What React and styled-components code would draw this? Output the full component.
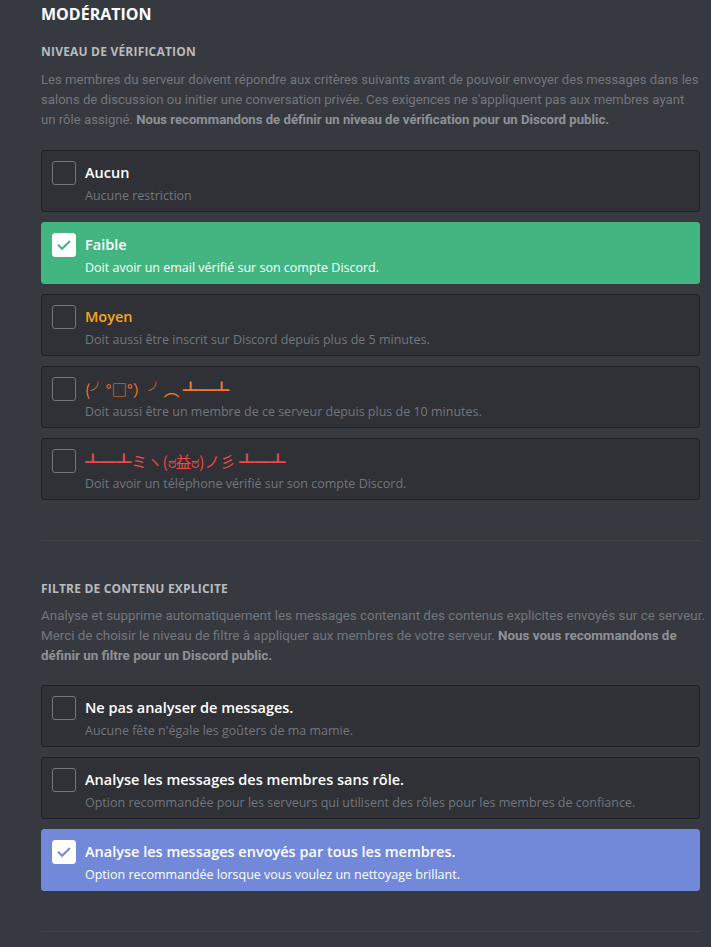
import React from "react";
import styled, { createGlobalStyle } from "styled-components";

const GlobalStyle = createGlobalStyle`
  html, body {
    margin: 0;
    padding: 0;
    background: #36393f;
  }
  body {
    font-family: "Open Sans", "Noto Sans", "DejaVu Sans", "Noto Sans CJK JP", sans-serif;
  }
`;

const verificationLevels = [
  { title: "Aucun", desc: "Aucune restriction" },
  { title: "Faible", desc: "Doit avoir un email vérifié sur son compte Discord.", checked: true, accent: "#43b581" },
  { title: "Moyen", desc: "Doit aussi être inscrit sur Discord depuis plus de 5 minutes.", color: "#faa61a" },
  { title: "(╯°□°）╯︵ ┻━┻", desc: "Doit aussi être un membre de ce serveur depuis plus de 10 minutes.", color: "#f57731", kaomoji: true },
  { title: "┻━┻ミヽ(ಠ益ಠ)ノ彡 ┻━┻", desc: "Doit avoir un téléphone vérifié sur son compte Discord.", color: "#f04747", kaomoji: true },
];

const filterLevels = [
  { title: "Ne pas analyser de messages.", desc: "Aucune fête n'égale les goûters de ma mamie." },
  { title: "Analyse les messages des membres sans rôle.", desc: "Option recommandée pour les serveurs qui utilisent des rôles pour les membres de confiance." },
  { title: "Analyse les messages envoyés par tous les membres.", desc: "Option recommandée lorsque vous voulez un nettoyage brillant.", checked: true, accent: "#7289da" },
];

const Check = ({ color }) => (
  <svg width="18" height="18" viewBox="0 0 24 24">
    <path d="M5 12.5l4.5 4.5L19 7.5" fill="none" stroke={color} strokeWidth="2.6" strokeLinecap="square" />
  </svg>
);

const RadioCard = ({ title, desc, checked, accent, color, kaomoji }) => (
  <Card $accent={checked ? accent : null}>
    <Box $checked={checked}>{checked && <Check color={accent} />}</Box>
    <CardText>
      <CardTitle $color={checked ? "#fff" : color} $kaomoji={kaomoji}>{title}</CardTitle>
      <CardDesc $checked={checked}>{desc}</CardDesc>
    </CardText>
  </Card>
);

const App = () => (
  <Page>
    <GlobalStyle />
    <Title>Modération</Title>

    <Heading>Niveau de vérification</Heading>
    <Description>
      Les membres du serveur doivent répondre aux critères suivants avant de pouvoir envoyer des messages dans les<br />
      salons de discussion ou initier une conversation privée. Ces exigences ne s'appliquent pas aux membres ayant<br />
      un rôle assigné. <strong>Nous recommandons de définir un niveau de vérification pour un Discord public.</strong>
    </Description>
    <CardList>
      {verificationLevels.map(l => <RadioCard key={l.desc} {...l} />)}
    </CardList>

    <Divider />

    <Heading $top={40}>Filtre de contenu explicite</Heading>
    <Description $top={9} $large>
      Analyse et supprime automatiquement les messages contenant des contenus explicites envoyés sur ce serveur.<br />
      Merci de choisir le niveau de filtre à appliquer aux membres de votre serveur. <strong>Nous vous recommandons de<br />
      définir un filtre pour un Discord public.</strong>
    </Description>
    <CardList $top={19}>
      {filterLevels.map(l => <RadioCard key={l.desc} {...l} />)}
    </CardList>

    <Divider />
  </Page>
);

const Page = styled.div`
  padding: 4px 11px 12px 41px;
  min-height: 947px;
  box-sizing: border-box;
  background: #36393f;
`;

const Title = styled.h2`
  margin: 0;
  font-size: 16px;
  line-height: 20px;
  font-weight: 700;
  text-transform: uppercase;
  color: #fff;
`;

const Heading = styled.h5`
  margin: ${p => p.$top ?? 20}px 0 0;
  font-size: 12px;
  line-height: 16px;
  font-weight: 700;
  text-transform: uppercase;
  letter-spacing: 0.2px;
  color: #b9bbbe;
`;

const Description = styled.div`
  margin-top: ${p => p.$top ?? 10}px;
  font-family: Roboto, "Open Sans", sans-serif;
  font-size: ${p => (p.$large ? "13.4px" : "13.15px")};
  line-height: 20px;
  white-space: nowrap;
  color: #72767d;
  strong {
    font-weight: 700;
    color: #8e9297;
  }
`;

const CardList = styled.div`
  margin-top: ${p => p.$top ?? 20}px;
  display: flex;
  flex-direction: column;
  gap: 10px;
`;

const Card = styled.div`
  display: flex;
  align-items: flex-start;
  gap: 9px;
  height: 62px;
  box-sizing: border-box;
  padding: 10px 10px 8px 10px;
  border-radius: 3px;
  border: 1px solid ${p => p.$accent || "#202225"};
  background: ${p => p.$accent || "#2f3136"};
`;

const Box = styled.div`
  flex: none;
  width: 24px;
  height: 24px;
  box-sizing: border-box;
  border-radius: 3px;
  border: 1px solid ${p => (p.$checked ? "#fff" : "#72767d")};
  background: ${p => (p.$checked ? "#fff" : "transparent")};
  display: flex;
  align-items: center;
  justify-content: center;
`;

const CardText = styled.div`
  display: flex;
  flex-direction: column;
  min-width: 0;
`;

const CardTitle = styled.div`
  font-family: ${p => (p.$kaomoji ? '"Noto Sans CJK JP", "DejaVu Sans", sans-serif' : "inherit")};
  font-size: ${p => (p.$kaomoji ? "15.5px" : "14.5px")};
  line-height: 24px;
  font-weight: ${p => (p.$kaomoji ? 400 : 600)};
  white-space: nowrap;
  color: ${p => p.$color || "#fff"};
`;

const CardDesc = styled.div`
  margin-top: 2px;
  font-size: 12.5px;
  line-height: 18px;
  white-space: nowrap;
  color: ${p => (p.$checked ? "#fff" : "#72767d")};
`;

const Divider = styled.div`
  margin-top: 40px;
  height: 1px;
  background: #42454a;
`;

export default App;
